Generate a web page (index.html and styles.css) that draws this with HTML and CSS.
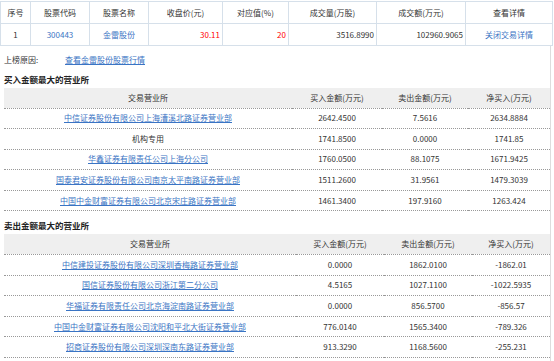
FILE: index.html
```html
<!DOCTYPE html>
<html lang="zh-CN">

<head>
    <meta charset="UTF-8" />
    <title>龙虎榜</title>
    <link rel="stylesheet" href="styles.css">
</head>

<body>
    <table class="summary">
        <tr>
            <th class="c-no">序号</th>
            <th class="c-code">股票代码</th>
            <th class="c-name">股票名称</th>
            <th class="c-close">收盘价(元)</th>
            <th class="c-val">对应值(%)</th>
            <th class="c-vol">成交量(万股)</th>
            <th class="c-amt">成交额(万元)</th>
            <th class="c-more">查看详情</th>
        </tr>
        <tr>
            <td class="center">1</td>
            <td class="center"><a class="plain" href="#">300443</a></td>
            <td class="center"><a class="plain" href="#">金雷股份</a></td>
            <td class="right red">30.11</td>
            <td class="right red">20</td>
            <td class="right">3516.8990</td>
            <td class="right">102960.9065</td>
            <td class="center"><a class="plain" href="#">关闭交易详情</a></td>
        </tr>
    </table>

    <div class="detail">
        <div class="reason">
            <span class="reason-label">上榜原因:</span>
            <a href="#">查看金雷股份股票行情</a>
        </div>

        <h3>买入金额最大的营业所</h3>
        <table class="list buy">
            <tr>
                <th class="c-dept">交易营业所</th>
                <th class="c-in">买入金额(万元)</th>
                <th class="c-out">卖出金额(万元)</th>
                <th class="c-net">净买入(万元)</th>
            </tr>
            <tr><td><a href="#">中信证券股份有限公司上海漕溪北路证券营业部</a></td><td>2642.4500</td><td>7.5616</td><td>2634.8884</td></tr>
            <tr><td>机构专用</td><td>1741.8500</td><td>0.0000</td><td>1741.85</td></tr>
            <tr><td><a href="#">华鑫证券有限责任公司上海分公司</a></td><td>1760.0500</td><td>88.1075</td><td>1671.9425</td></tr>
            <tr><td><a href="#">国泰君安证券股份有限公司南京太平南路证券营业部</a></td><td>1511.2600</td><td>31.9561</td><td>1479.3039</td></tr>
            <tr><td><a href="#">中国中金财富证券有限公司北京宋庄路证券营业部</a></td><td>1461.3400</td><td>197.9160</td><td>1263.424</td></tr>
        </table>

        <h3>卖出金额最大的营业所</h3>
        <table class="list sell">
            <tr>
                <th class="c-dept">交易营业所</th>
                <th class="c-in">买入金额(万元)</th>
                <th class="c-out">卖出金额(万元)</th>
                <th class="c-net">净买入(万元)</th>
            </tr>
            <tr><td><a href="#">中信建投证券股份有限公司深圳香梅路证券营业部</a></td><td>0.0000</td><td>1862.0100</td><td>-1862.01</td></tr>
            <tr><td><a href="#">国信证券股份有限公司浙江第二分公司</a></td><td>4.5165</td><td>1027.1100</td><td>-1022.5935</td></tr>
            <tr><td><a href="#">华福证券有限责任公司北京海淀南路证券营业部</a></td><td>0.0000</td><td>856.5700</td><td>-856.57</td></tr>
            <tr><td><a href="#">中国中金财富证券有限公司沈阳和平北大街证券营业部</a></td><td>776.0140</td><td>1565.3400</td><td>-789.326</td></tr>
            <tr><td><a href="#">招商证券股份有限公司深圳深南东路证券营业部</a></td><td>913.3290</td><td>1168.5600</td><td>-255.231</td></tr>
        </table>
    </div>
</body>

</html>
```

FILE: styles.css
```css
body {
    margin: 0;
    font-family: 'Noto Sans CJK SC', sans-serif;
    font-size: 8px;
    color: #333;
    background: #fff;
}

a {
    color: #3a74c4;
    text-decoration: underline;
}

a.plain {
    text-decoration: none;
}

table {
    border-collapse: collapse;
    table-layout: fixed;
}

th,
td {
    box-sizing: border-box;
    white-space: nowrap;
    padding: 0;
    line-height: 12px;
}

/* top summary */
.summary {
    width: 553px;
    margin-top: 1px;
}

.summary th,
.summary td {
    border: 1px solid #d6e0ea;
}

.summary th {
    height: 22px;
    font-weight: normal;
    text-align: center;
}

.summary td {
    height: 22px;
}

.summary .c-no { width: 30px; }
.summary .c-code { width: 59px; }
.summary .c-name { width: 59px; }
.summary .c-close { width: 74px; }
.summary .c-val { width: 66px; }
.summary .c-vol { width: 88px; }
.summary .c-amt { width: 89px; }

.center { text-align: center; }
.right { text-align: right; padding-right: 2px; }
.red { color: #f00; }

/* detail area */
.detail {
    width: 546px;
    padding-left: 4px;
    border-right: 1px solid #ddd;
    padding-bottom: 6px;
}

.reason {
    display: flex;
    align-items: center;
    height: 12px;
    padding-top: 7px;
}

.reason-label {
    width: 61px;
}

.detail h3 {
    margin: 0;
    font-size: 8.5px;
    font-weight: bold;
    color: #222;
    height: 12px;
    line-height: 12px;
    padding-top: 8px;
    padding-bottom: 3px;
}

.list {
    width: 546px;
}

.list th {
    background: #efefef;
    font-weight: normal;
    height: 20px;
    text-align: center;
    border-bottom: 1px dotted #999;
}

.list td {
    height: 20.6px;
    text-align: center;
    border-bottom: 1px dotted #999;
}

.buy .c-dept { width: 288px; }
.buy .c-in { width: 90px; }
.buy .c-out { width: 86px; }

.sell .c-dept { width: 292px; }
.sell .c-in { width: 88px; }
.sell .c-out { width: 88px; }
```
